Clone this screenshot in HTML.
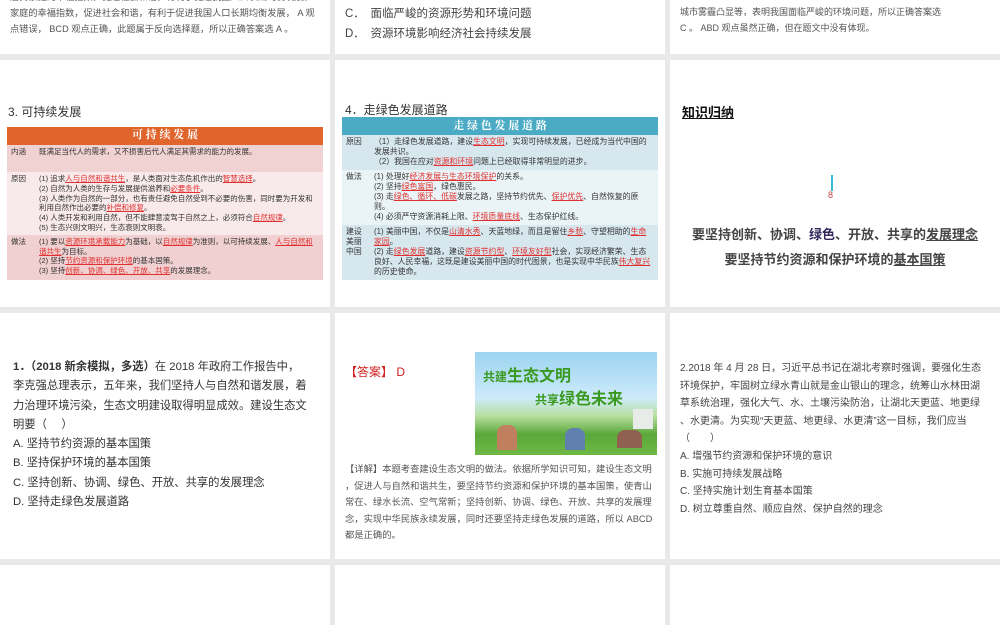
<!DOCTYPE html>
<html><head><meta charset="utf-8"><style>
*{margin:0;padding:0;box-sizing:border-box}
body{width:1000px;height:600px;background:#e9e9e9;position:relative;overflow:hidden;font-family:"Liberation Sans","Noto Sans CJK SC",sans-serif;color:#333}
.s{position:absolute;background:#fff;overflow:hidden}
.a{position:absolute;white-space:nowrap}
table{border-collapse:collapse;position:absolute;font-size:7.5px;line-height:9.8px;color:#333}
td{vertical-align:top;padding:2px 4px}
u.r{color:#e03030}
</style></head><body>
<!-- row 1 -->
<div class="s" style="left:0;top:-200px;width:330px;height:254px">
 <div class="a" style="left:10px;top:189px;font-size:9.2px;color:#555;line-height:16px">居民家庭的幸福指数，促进社会和谐，有利于促进我国人口长期均衡发展。<br>家庭的幸福指数，促进社会和谐，有利于促进我国人口长期均衡发展， A 观<br>点错误， BCD 观点正确，此题属于反向选择题，所以正确答案选 A 。</div>
</div>
<div class="s" style="left:335px;top:-200px;width:330px;height:254px">
 <div class="a" style="left:10px;top:204px;font-size:11.5px;color:#444;line-height:20px">C．　面临严峻的资源形势和环境问题<br>D．　资源环境影响经济社会持续发展</div>
</div>
<div class="s" style="left:670px;top:-200px;width:330px;height:254px">
 <div class="a" style="left:10px;top:188px;font-size:9px;color:#555;line-height:16px">城市雾霾凸显等，表明我国面临严峻的环境问题，所以正确答案选<br>城市雾霾凸显等，表明我国面临严峻的环境问题，所以正确答案选<br>C 。 ABD 观点虽然正确，但在题文中没有体现。</div>
</div>
<!-- row 2 -->
<div class="s" style="left:0;top:60px;width:330px;height:247px">
 <div class="a" style="left:8px;top:43px;font-size:12px;color:#333">3. 可持续发展</div>
 <table style="left:7px;top:67px;width:316px">
  <tr style="background:#e0652c;height:18px"><td colspan="2" style="text-align:center;color:#fff;font-weight:bold;font-size:11px;font-family:'Noto Serif CJK SC',serif;padding:3px">可 持 续 发 展</td></tr>
  <tr style="background:#f0d2d2;height:27px"><td style="width:28px">内涵</td><td>既满足当代人的需求，又不损害后代人满足其需求的能力的发展。</td></tr>
  <tr style="background:#f8eaea;height:60px"><td>原因</td><td>(1) 追求<u class="r">人与自然和谐共生</u>，是人类面对生态危机作出的<u class="r">智慧选择</u>。<br>(2) 自然为人类的生存与发展提供滋养和<u class="r">必要条件</u>。<br>(3) 人类作为自然的一部分，也有责任避免自然受到不必要的伤害，同时要为开发和利用自然作出必要的<u class="r">补偿和修复</u>。<br>(4) 人类开发和利用自然，但不能肆意凌驾于自然之上，必须符合<u class="r">自然规律</u>。<br>(5) 生态兴则文明兴，生态衰则文明衰。</td></tr>
  <tr style="background:#f0d0d0;height:45px"><td>做法</td><td>(1) 要以<u class="r">资源环境承载能力</u>为基础，以<u class="r">自然规律</u>为准则，以可持续发展、<u class="r">人与自然和谐共生</u>为目标。<br>(2) 坚持<u class="r">节约资源和保护环境</u>的基本国策。<br>(3) 坚持<u class="r">创新、协调、绿色、开放、共享</u>的发展理念。</td></tr>
 </table>
</div>
<div class="s" style="left:335px;top:60px;width:330px;height:247px">
 <div class="a" style="left:10px;top:41px;font-size:12px;color:#333">4．走绿色发展道路</div>
 <table style="left:7px;top:57px;width:316px;font-size:7.9px;line-height:10.2px">
  <tr style="background:#4babc5;height:18px"><td colspan="2" style="text-align:center;color:#fff;font-weight:bold;font-size:11px;font-family:'Noto Serif CJK SC',serif;padding:3px">走 绿 色 发 展 道 路</td></tr>
  <tr style="background:#d6e7ee;height:33px"><td style="width:28px">原因</td><td>（1）走绿色发展道路，建设<u class="r">生态文明</u>，实现可持续发展，已经成为当代中国的发展共识。<br>（2）我国在应对<u class="r">资源和环境</u>问题上已经取得非常明显的进步。</td></tr>
  <tr style="background:#eaf3f6;height:53px"><td>做法</td><td>(1) 处理好<u class="r">经济发展与生态环境保护</u>的关系。<br>(2) 坚持<u class="r">绿色富国</u>，绿色惠民。<br>(3) 走<u class="r">绿色、循环、低碳</u>发展之路，坚持节约优先、<u class="r">保护优先</u>、自然恢复的原则。<br>(4) 必须严守资源消耗上限、<u class="r">环境质量底线</u>、生态保护红线。</td></tr>
  <tr style="background:#d6e7ee;height:52px"><td>建设<br>美丽<br>中国</td><td>(1) 美丽中国，不仅是<u class="r">山清水秀</u>、天蓝地绿，而且是留住<u class="r">乡愁</u>、守望相助的<u class="r">生命家园</u>。<br>(2) 走<u class="r">绿色发展</u>道路，建设<u class="r">资源节约型</u>、<u class="r">环境友好型</u>社会，实现经济繁荣、生态良好、人民幸福，这既是建设美丽中国的时代图景，也是实现中华民族<u class="r">伟大复兴</u>的历史使命。</td></tr>
 </table>
</div>
<div class="s" style="left:670px;top:60px;width:330px;height:247px">
 <div class="a" style="left:12px;top:42px;font-size:13px;font-weight:bold;color:#111;text-decoration:underline">知识归纳</div>
 <div class="a" style="left:161px;top:115px;width:2px;height:16px;background:#38b8d8"></div>
 <div class="a" style="left:158px;top:130px;font-size:9px;color:#c04040">8</div>
 <div class="a" style="left:0;width:330px;text-align:center;top:162px;font-size:13px;font-weight:bold;color:#444;line-height:25px">要坚持创新、协调、<span style="color:#33275e">绿色</span>、开放、共享的<u>发展理念</u><br>要坚持节约资源和保护环境的<u>基本国策</u></div>
</div>
<!-- row 3 -->
<div class="s" style="left:0;top:313px;width:330px;height:246px">
 <div class="a" style="left:13px;top:45px;font-size:11.3px;color:#333;line-height:19.3px"><b>1．（2018 新余模拟，多选）</b>在 2018 年政府工作报告中，<br>李克强总理表示，五年来，我们坚持人与自然和谐发展，着<br>力治理环境污染，生态文明建设取得明显成效。建设生态文<br>明要（　 ）<br>A. 坚持节约资源的基本国策<br>B. 坚持保护环境的基本国策<br>C. 坚持创新、协调、绿色、开放、共享的发展理念<br>D. 坚持走绿色发展道路</div>
</div>
<div class="s" style="left:335px;top:313px;width:330px;height:246px">
 <div class="a" style="left:10px;top:50px;font-size:12px;color:#d02020">【答案】 D</div>
 <div class="a" style="left:140px;top:39px;width:182px;height:103px;background:linear-gradient(#9cd4f0 0%,#cdeafa 45%,#b8e0a0 62%,#5aa83a 80%,#6fb844 100%)">
  <div class="a" style="left:8px;top:10px;font-size:12px;font-weight:bold;color:#3a9a20">共建<span style="font-size:16px">生态文明</span></div>
  <div class="a" style="left:60px;top:33px;font-size:12px;font-weight:bold;color:#3a9a20">共享<span style="font-size:16px">绿色未来</span></div>
  <div class="a" style="left:158px;top:57px;width:20px;height:20px;background:#e8ece8"></div>
  <div class="a" style="left:22px;top:73px;width:20px;height:25px;background:#c08060;border-radius:8px 8px 0 0"></div>
  <div class="a" style="left:90px;top:76px;width:20px;height:22px;background:#6080b0;border-radius:8px 8px 0 0"></div>
  <div class="a" style="left:142px;top:78px;width:25px;height:18px;background:#906050;border-radius:8px 8px 0 0"></div>
 </div>
 <div class="a" style="left:10px;top:148px;font-size:9.3px;color:#555;line-height:16.6px">【详解】本题考查建设生态文明的做法。依据所学知识可知，建设生态文明<br>，促进人与自然和谐共生，要坚持节约资源和保护环境的基本国策，使青山<br>常在、绿水长流、空气常新；坚持创新、协调、绿色、开放、共享的发展理<br>念，实现中华民族永续发展，同时还要坚持走绿色发展的道路，所以 ABCD<br>都是正确的。</div>
</div>
<div class="s" style="left:670px;top:313px;width:330px;height:246px">
 <div class="a" style="left:10px;top:47px;font-size:10px;color:#444;line-height:17.6px">2.2018 年 4 月 28 日，习近平总书记在湖北考察时强调，要强化生态<br>环境保护，牢固树立绿水青山就是金山银山的理念，统筹山水林田湖<br>草系统治理，强化大气、水、土壤污染防治，让湖北天更蓝、地更绿<br>、水更清。为实现“天更蓝、地更绿、水更清”这一目标，我们应当<br>（　　）<br>A. 增强节约资源和保护环境的意识<br>B. 实施可持续发展战略<br>C. 坚持实施计划生育基本国策<br>D. 树立尊重自然、顺应自然、保护自然的理念</div>
</div>
<!-- row 4 -->
<div class="s" style="left:0;top:565px;width:330px;height:60px"></div>
<div class="s" style="left:335px;top:565px;width:330px;height:60px"></div>
<div class="s" style="left:670px;top:565px;width:330px;height:60px"></div>
</body></html>
